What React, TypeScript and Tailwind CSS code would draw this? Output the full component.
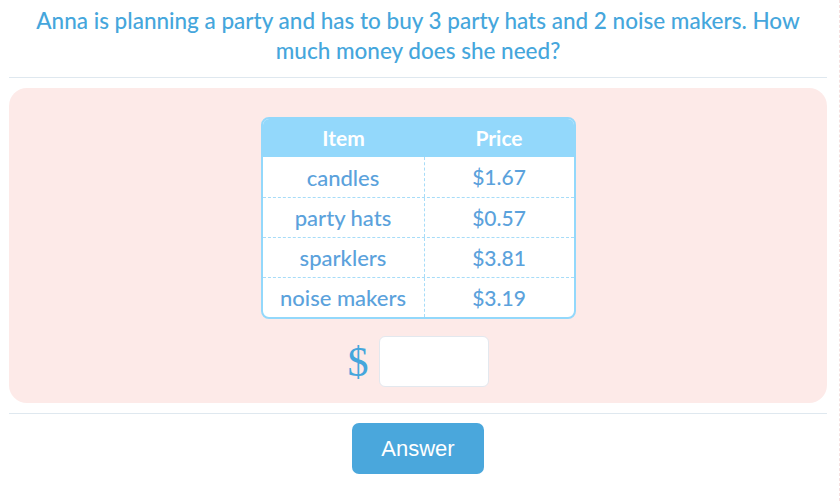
import React, { useState } from 'react';

const rows = [
  { item: 'candles', price: '$1.67' },
  { item: 'party hats', price: '$0.57' },
  { item: 'sparklers', price: '$3.81' },
  { item: 'noise makers', price: '$3.19' },
];

export default function App() {
  const [answer, setAnswer] = useState('');

  return (
    <div className="w-[840px] h-[501px] bg-white border-r border-dashed border-r-[#f6dede]">
      <div className="w-[838px] pl-[9px] pr-[11px]">
        <p
          className="pt-[6px] pb-[11px] text-center text-[22.5px] font-medium leading-[30px] text-[#45a6dc]"
          style={{ fontFamily: 'Lato, "Open Sans", sans-serif' }}
        >
          Anna is planning a party and has to buy 3 party hats and 2 noise makers. How
          <br />
          much money does she need?
        </p>
        <div className="h-px bg-[#dfe8ef]" />

        <div className="mt-[10px] h-[315px] rounded-[18px] bg-[#fdeae8] pt-[29px] flex flex-col items-center">
          <div
            className="w-[315px] rounded-[8px] border-2 border-[#93d8fb] bg-white overflow-hidden"
            style={{ fontFamily: 'Lato, "Open Sans", sans-serif' }}
          >
            <div className="flex h-[38px] bg-[#93d8fb] text-white font-bold items-center text-[21px]">
              <div className="w-[162px] text-center">Item</div>
              <div className="flex-1 text-center">Price</div>
            </div>
            {rows.map((r, i) => (
              <div
                key={r.item}
                className={`flex h-[40px] items-center text-[#5ba2dc] font-medium ${i > 0 ? 'border-t border-dashed border-[#a7dcf8]' : ''}`}
              >
                <div className="w-[162px] h-full flex items-center justify-center border-r border-dashed border-[#a7dcf8] text-[22px]">
                  {r.item}
                </div>
                <div className="flex-1 text-center text-[21px]">{r.price}</div>
              </div>
            ))}
          </div>

          <div className="mt-[17px] flex items-center gap-[10px]">
            <span
              className="text-[42px] leading-none text-[#45a6dc]"
              style={{ fontFamily: '"Liberation Serif", serif' }}
            >
              $
            </span>
            <input
              value={answer}
              onChange={(e) => setAnswer(e.target.value)}
              className="w-[110px] h-[51px] rounded-[6px] border border-[#e3e8ee] bg-white outline-none px-2 text-[20px]"
            />
          </div>
        </div>

        <div className="mt-[10px] h-px bg-[#dfe8ef]" />

        <div className="mt-[9px] flex justify-center">
          <button
            type="button"
            className="w-[132px] h-[51px] rounded-[7px] bg-[#4aa7dc] text-white text-[22px]"
            style={{ fontFamily: '"Liberation Sans", Arial, sans-serif' }}
          >
            Answer
          </button>
        </div>
      </div>
    </div>
  );
}
